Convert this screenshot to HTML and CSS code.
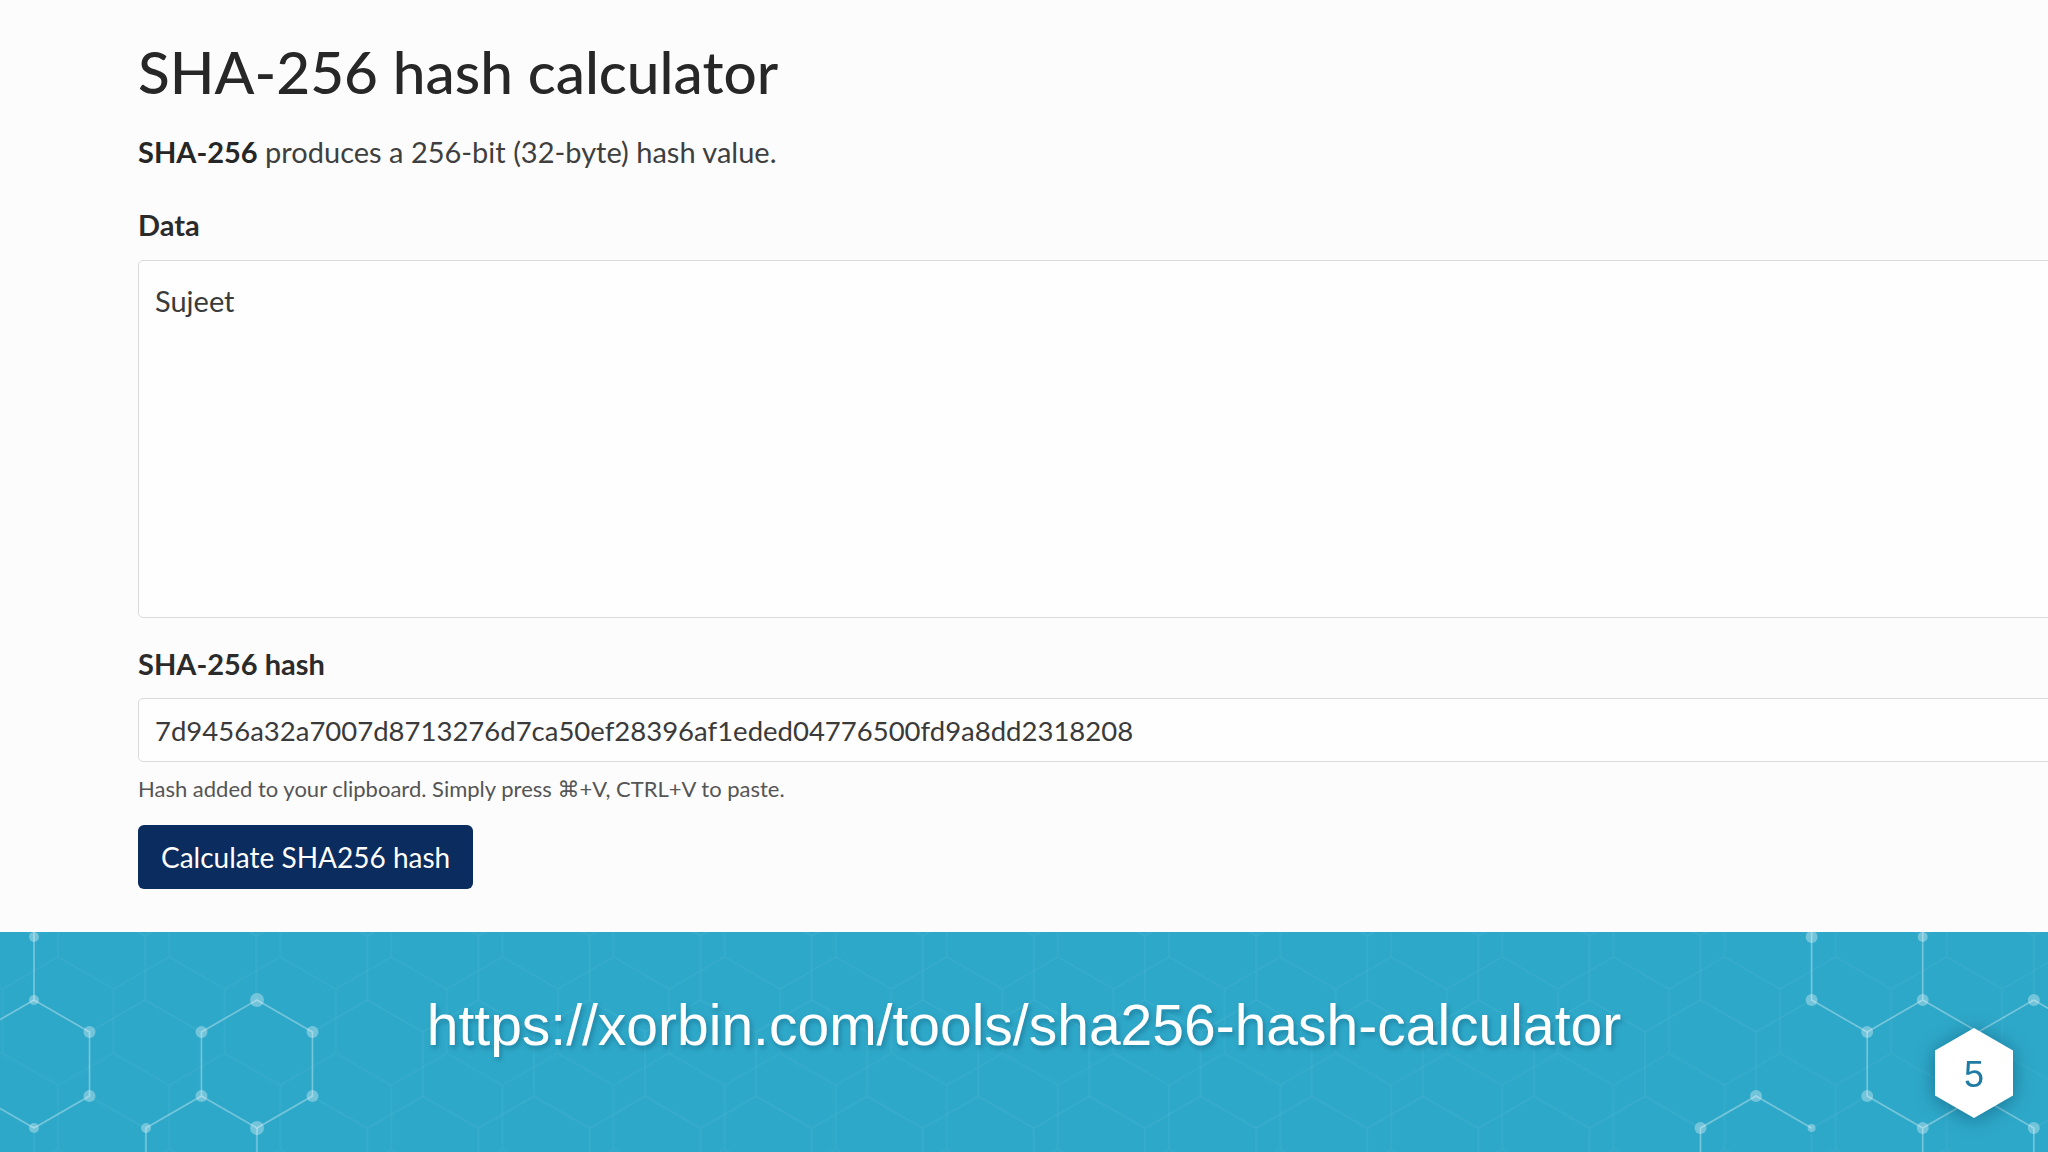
FILE: index.html
```html
<!DOCTYPE html>
<html lang="en">
<head>
<meta charset="utf-8">
<title>SHA-256 hash calculator</title>
<link rel="stylesheet" href="styles.css">
</head>
<body>
<main class="page">
  <section class="tool">
    <h1 class="title">SHA-256 hash calculator</h1>
    <p class="lead"><strong>SHA-256</strong> produces a 256-bit (32-byte) hash value.</p>
    <label class="label label-data" for="data">Data</label>
    <textarea id="data" class="field field-data" readonly>Sujeet</textarea>
    <label class="label label-hash" for="hash">SHA-256 hash</label>
    <input id="hash" class="field field-hash" type="text" readonly value="7d9456a32a7007d8713276d7ca50ef28396af1eded04776500fd9a8dd2318208">
    <p class="help">Hash added to your clipboard. Simply press ⌘+V, CTRL+V to paste.</p>
    <button class="btn" type="button">Calculate SHA256 hash</button>
  </section>
  <footer class="banner">
    <svg class="banner-bg" viewBox="0 0 2048 220" preserveAspectRatio="none" aria-hidden="true">
      <defs>
        <pattern id="hexA" patternUnits="userSpaceOnUse" x="34" y="68" width="111.1" height="192.4">
          <path d="M0,0 L55.55,32.07 L111.1,0 M55.55,32.07 V96.2 M0,128.3 L55.55,96.2 L111.1,128.3 M0,128.3 V192.4 M111.1,128.3 V192.4 M0,0 V-64 M111.1,0 V-64" fill="none" stroke="#ffffff" stroke-width="1.5"/>
        </pattern>
        <pattern id="hexB" patternUnits="userSpaceOnUse" x="58" y="25" width="111.1" height="192.4">
          <path d="M0,0 L55.55,32.07 L111.1,0 M55.55,32.07 V96.2 M0,128.3 L55.55,96.2 L111.1,128.3 M0,128.3 V192.4 M111.1,128.3 V192.4 M0,0 V-64 M111.1,0 V-64" fill="none" stroke="#ffffff" stroke-width="1.5"/>
        </pattern>
      </defs>
      <rect class="lattice-a" x="0" y="0" width="2048" height="220" fill="url(#hexA)"/>
      <rect class="lattice-b" x="0" y="0" width="2048" height="220" fill="url(#hexB)"/>
      <g class="lines">
        <path d="M34,0 V68 L89.5,100 V164 L34,196"/>
        <path d="M-21.5,100 L34,68 M-21.5,164 L34,196"/>
        <path d="M257,68 L312.5,100 V164 L257,196 L201.5,164 V100 Z"/>
        <path d="M201.5,164 L146,196 V220 M257,196 V220"/>
        <path d="M1811.6,0 V68 L1867.2,100 L1922.7,68 V0 M1922.7,68 L1978.2,100"/>
        <path d="M1867.2,100 V164 L1922.7,196 L1978.2,164 M1922.7,196 V220"/>
        <path d="M2033.8,68 L1978.2,100 M2033.8,68 L2089,100 M2033.8,196 L1978.2,164 M2033.8,196 V220"/>
        <path d="M1700.5,220 V196 L1756,164 L1811.6,196"/>
      </g>
      <g class="nodes">
        <circle cx="34" cy="5" r="5"/>
        <circle cx="34" cy="68" r="5"/>
        <circle cx="89.5" cy="100" r="6"/>
        <circle cx="89.5" cy="164" r="6"/>
        <circle cx="34" cy="196" r="5"/>
        <circle cx="257" cy="68" r="7"/>
        <circle cx="312.5" cy="100" r="6"/>
        <circle cx="312.5" cy="164" r="6"/>
        <circle cx="257" cy="196" r="7"/>
        <circle cx="201.5" cy="164" r="6"/>
        <circle cx="201.5" cy="100" r="6"/>
        <circle cx="146" cy="196" r="5"/>
        <circle cx="1811.6" cy="5" r="6"/>
        <circle cx="1811.6" cy="68" r="6"/>
        <circle cx="1867.2" cy="100" r="6"/>
        <circle cx="1922.7" cy="68" r="6"/>
        <circle cx="1922.7" cy="5" r="5"/>
        <circle cx="1867.2" cy="164" r="6"/>
        <circle cx="1922.7" cy="196" r="6"/>
        <circle cx="2033.8" cy="68" r="6"/>
        <circle cx="2033.8" cy="196" r="6"/>
        <circle cx="1700.5" cy="196" r="6"/>
        <circle cx="1756" cy="164" r="6"/>
        <circle cx="1811.6" cy="196" r="4"/>
      </g>
    </svg>
    <p class="url">https://xorbin.com/tools/sha256-hash-calculator</p>
    <div class="badge"><div class="badge-hex">5</div></div>
  </footer>
</main>
</body>
</html>
```
FILE: styles.css
```css
* {
  box-sizing: border-box;
}

html,
body {
  margin: 0;
  padding: 0;
}

body {
  width: 2048px;
  height: 1152px;
  overflow: hidden;
  background: #fcfcfc;
  font-family: Lato, "DejaVu Sans", sans-serif;
  color: #333333;
}

.page {
  display: flex;
  flex-direction: column;
  height: 1152px;
}

.tool {
  display: flex;
  flex-direction: column;
  align-items: flex-start;
  padding: 36px 0 43px 138px;
}

.title {
  margin: 0;
  font-size: 58.5px;
  line-height: 70px;
  font-weight: 500;
  color: #272727;
}

.lead {
  margin: 26px 0 0;
  font-size: 29px;
  line-height: 40px;
  color: #3f3f3f;
}

.lead strong {
  font-weight: 700;
  color: #262626;
}

.label {
  font-size: 29px;
  line-height: 36px;
  font-weight: 700;
  color: #2b2b2b;
}

.label-data {
  margin-top: 35px;
}

.label-hash {
  margin-top: 28px;
}

.field {
  width: 1960px;
  border: 1px solid #dadada;
  border-radius: 5px;
  background: #fefefe;
  font-family: Lato, "DejaVu Sans", sans-serif;
  color: #3a3a3a;
  outline: none;
}

.field-data {
  margin-top: 17px;
  height: 358px;
  padding: 20px 16px;
  font-size: 29px;
  line-height: 40px;
  resize: none;
}

.field-hash {
  margin-top: 16px;
  height: 64px;
  padding: 0 16px;
  font-size: 27.5px;
}

.help {
  margin: 13px 0 0;
  font-size: 22px;
  line-height: 28px;
  color: #555555;
}

.btn {
  margin-top: 22px;
  height: 64px;
  padding: 0 23px;
  border: 0;
  border-radius: 6px;
  background: #0b2c5e;
  color: #ffffff;
  font-family: Lato, "DejaVu Sans", sans-serif;
  font-size: 28px;
}

.banner {
  position: relative;
  flex: 1;
  display: flex;
  justify-content: center;
  align-items: flex-start;
  padding-top: 58px;
  background: #2ea8c9;
  overflow: hidden;
}

.banner-bg {
  position: absolute;
  left: 0;
  top: 0;
  width: 100%;
  height: 100%;
}

.lattice-a {
  opacity: 0.05;
}

.lattice-b {
  opacity: 0.04;
}

.lines path {
  fill: none;
  stroke: rgba(255, 255, 255, 0.32);
  stroke-width: 1.6;
}

.nodes circle {
  fill: rgba(255, 255, 255, 0.32);
}

.url {
  position: relative;
  margin: 0;
  font-family: "Liberation Sans", Arial, sans-serif;
  font-size: 57px;
  line-height: 70px;
  color: #ffffff;
  text-shadow: 2px 3px 5px rgba(0, 60, 90, 0.35);
}

.badge {
  position: absolute;
  left: 1935px;
  top: 96px;
  width: 78px;
  height: 90px;
  filter: drop-shadow(0 2px 10px rgba(0, 50, 80, 0.45));
}

.badge-hex {
  width: 100%;
  height: 100%;
  display: flex;
  align-items: center;
  justify-content: center;
  padding-top: 3px;
  background: #ffffff;
  clip-path: polygon(50% 0, 100% 25%, 100% 75%, 50% 100%, 0 75%, 0 25%);
  font-family: "Liberation Sans", Arial, sans-serif;
  font-size: 36px;
  color: #1f7ba3;
}
```
